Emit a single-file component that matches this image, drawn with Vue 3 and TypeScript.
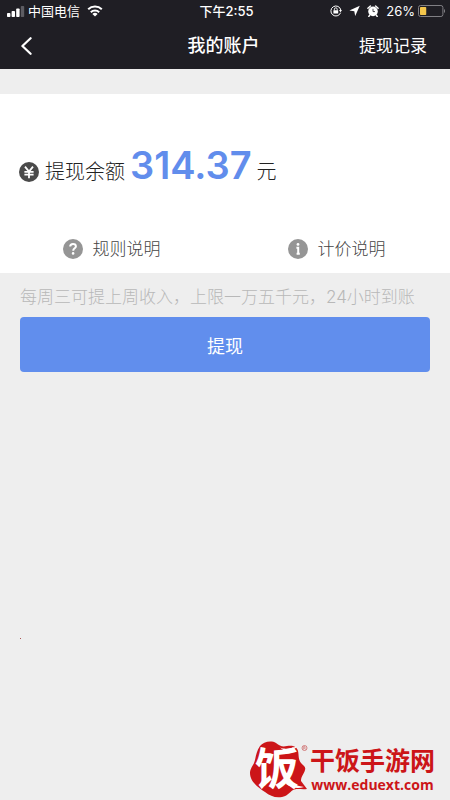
<script setup lang="ts">
import { ref } from 'vue'

const carrier = ref('中国电信')
const time = ref('下午2:55')
const batteryLevel = ref(26)
const balance = ref(314.37)
</script>

<template>
  <div class="page">
    <header class="top">
      <div class="status">
        <div class="status-left">
          <svg class="signal" width="18" height="12" viewBox="0 0 18 12" aria-hidden="true">
            <g fill="#fff">
              <rect x="0" y="8" width="3.4" height="4" rx="0.8" />
              <rect x="4.6" y="6" width="3.4" height="6" rx="0.8" />
              <rect x="9.2" y="3.5" width="3.4" height="8.5" rx="0.8" />
            </g>
            <rect x="13.8" y="1" width="3.4" height="11" rx="0.8" fill="#5d5c62" />
          </svg>
          <span>{{ carrier }}</span>
          <svg class="wifi" width="16" height="12" viewBox="0 0 16 12" aria-hidden="true">
            <g fill="none" stroke="#fff" stroke-width="2">
              <path d="M1.2 4.3a9.8 9.8 0 0 1 13.6 0" />
              <path d="M3.8 7.2a6.1 6.1 0 0 1 8.4 0" />
            </g>
            <path d="M8 11.6 5.4 9a3.8 3.8 0 0 1 5.2 0z" fill="#fff" />
          </svg>
        </div>
        <span class="clock">{{ time }}</span>
        <div class="status-right">
          <svg width="12" height="12" viewBox="0 0 12 12" aria-hidden="true">
            <path d="M10.6 7.7A5 5 0 1 1 10.8 5" fill="none" stroke="#fff" stroke-width="1" />
            <path d="M9 5h3l-1.5 2.2z" fill="#fff" />
            <rect x="3.4" y="5.2" width="4.8" height="3.4" rx="0.4" fill="#fff" />
            <path d="M4.4 5.4V4.2a1.4 1.4 0 0 1 2.8 0v1.2" fill="none" stroke="#fff" stroke-width="0.9" />
          </svg>
          <svg width="11" height="12" viewBox="0 0 11 12" aria-hidden="true">
            <path d="M10.8 0.8 6.2 11 5.3 6.3 0.4 5.5z" fill="#fff" />
          </svg>
          <svg width="12" height="12" viewBox="0 0 12 12" aria-hidden="true">
            <circle cx="6" cy="6.4" r="4.8" fill="#fff" />
            <path d="M0.9 3.2 3.4 1M11.1 3.2 8.6 1M2.7 10.2 1.8 11.5M9.3 10.2l0.9 1.3" stroke="#fff" stroke-width="1.4" stroke-linecap="round" />
            <path d="M6 3.8v2.8h2" fill="none" stroke="#1f1e24" stroke-width="0.8" />
          </svg>
          <span class="percent">{{ batteryLevel }}%</span>
          <svg class="battery" width="28" height="12" viewBox="0 0 28 12" aria-hidden="true">
            <rect x="0.5" y="0.5" width="24.4" height="11" rx="2" fill="none" stroke="#807f84" />
            <rect x="2" y="2" :width="batteryLevel * 0.24" height="8" rx="0.8" fill="#f4c64b" />
            <path d="M26 4a2.4 2.4 0 0 1 0 4z" fill="#807f84" />
          </svg>
        </div>
      </div>
      <nav class="nav">
        <button class="back" type="button" aria-label="返回">
          <svg width="12" height="18" viewBox="0 0 12 18" aria-hidden="true">
            <path d="M10.6 1.2 2.4 9l8.2 7.8" fill="none" stroke="#fff" stroke-width="2.2" stroke-linecap="round" stroke-linejoin="round" />
          </svg>
        </button>
        <h1>我的账户</h1>
        <a class="records" href="#records">提现记录</a>
      </nav>
    </header>

    <main>
      <section class="account">
        <p class="balance">
          <svg width="20" height="20" viewBox="0 0 20 20" aria-hidden="true">
            <circle cx="10" cy="10" r="10" fill="#4a4a4a" />
            <path d="m6 4.6 4 5 4-5M10 9.6v6.6M5.4 9.9h9.2M5.4 12.7h9.2" fill="none" stroke="#fff" stroke-width="1.8" />
          </svg>
          <span class="label">提现余额</span>
          <strong>{{ balance }}</strong>
          <span class="unit">元</span>
        </p>
        <div class="links">
          <a href="#rules">
            <svg width="20" height="20" viewBox="0 0 20 20" aria-hidden="true">
              <circle cx="10" cy="10" r="10" fill="#959595" />
              <path d="M7.2 7.6C7.2 5.8 8.4 5 10 5s2.9.9 2.9 2.4c0 1.9-2.7 2-2.7 4.3" fill="none" stroke="#fff" stroke-width="2" />
              <circle cx="10.1" cy="14.4" r="1.3" fill="#fff" />
            </svg>
            <span>规则说明</span>
          </a>
          <a href="#pricing">
            <svg width="20" height="20" viewBox="0 0 20 20" aria-hidden="true">
              <circle cx="10" cy="10" r="10" fill="#959595" />
              <circle cx="10" cy="5.4" r="1.4" fill="#fff" />
              <path d="M8.4 8.8H10.2V15M8.6 14.8h3.2" fill="none" stroke="#fff" stroke-width="2" />
            </svg>
            <span>计价说明</span>
          </a>
        </div>
      </section>

      <section class="withdraw">
        <p class="hint">每周三可提上周收入，上限一万五千元，24小时到账</p>
        <button class="submit" type="button">提现</button>
        <i class="speck"></i>
      </section>
    </main>

    <aside class="brand">
      <svg class="emblem" width="60" height="58" viewBox="0 0 60 58" aria-hidden="true">
        <path d="M11 6C14 2 22 0 27 3c4 3 6 4 11 3 5-1 10 0 11 5 1 4 0 8 3 12 3 3 5 4 4 7-1 4-4 6-4 11l6 8c-5 1-10-1-14 1-4 3-6 6-11 7-7 1-12-1-17-5C10 48 1 42 1 33c0-5 4-8 5-13C7 15 8 10 11 6Z" fill="#cc1518" />
        <text x="6" y="45" class="emblem-text">饭</text>
        <path d="M31 7.5c5 2.5 12 .5 17-1-2 3-7 5-13 4z" fill="#fff" />
        <path d="M38 40c5 4 10 6 17 7-6 2-13 1-18-3z" fill="#fff" />
        <circle cx="55.5" cy="8" r="2.5" fill="none" stroke="#c66" stroke-width="0.8" />
        <path d="M54.7 9.5v-3h1q1 .7 0 1.5h-1m1 0 .8 1.5" fill="none" stroke="#c66" stroke-width="0.6" />
      </svg>
      <div class="brand-text">
        <span class="brand-name">干饭手游网</span>
        <span class="brand-url">www.eduext.com</span>
      </div>
    </aside>
  </div>
</template>

<style>
body {
  background: #eee;
}
</style>

<style scoped>
.page {
  position: relative;
  min-height: 100vh;
  background: #eee;
  color: #222;
  font-family: Inter, "Noto Sans CJK SC", sans-serif;
}

h1,
p {
  margin: 0;
  font-weight: 400;
}

a {
  color: inherit;
  text-decoration: none;
}

button {
  border: 0;
  padding: 0;
  font: inherit;
  cursor: pointer;
}

svg {
  display: block;
  flex: none;
}

.top {
  background: #1f1e24;
  color: #fff;
}

.status,
.nav {
  display: grid;
  grid-template-columns: 1fr auto 1fr;
  align-items: center;
}

.status {
  height: 22px;
  padding: 0 4px 0 7px;
  font-size: 13px;
  line-height: 22px;
}

.status-left,
.status-right {
  display: flex;
  align-items: center;
}

.status-left {
  gap: 3px;
}

.wifi {
  margin-left: 4px;
}

.status-right {
  justify-content: flex-end;
  gap: 7px;
}

.clock {
  font-weight: 500;
}

.percent {
  margin-right: -4px;
}

.nav {
  height: 47px;
  padding: 0 23px 0 20px;
}

.back {
  display: flex;
  justify-self: start;
  background: none;
  color: inherit;
}

h1 {
  font-size: 18px;
  font-weight: 500;
  line-height: 24px;
}

.records {
  justify-self: end;
  font-size: 17px;
  line-height: 24px;
}

.account {
  margin-top: 25px;
  padding: 46px 0 12px;
  background: #fff;
}

.balance {
  display: flex;
  align-items: baseline;
  padding: 0 19px;
  line-height: 50px;
}

.balance svg {
  align-self: center;
  margin-top: 6px;
  margin-right: 6px;
}

.label,
.unit {
  font-size: 20px;
  font-weight: 300;
}

strong {
  margin: 0 5px;
  color: #618dec;
  font-size: 38px;
  font-weight: 600;
}

.links {
  display: grid;
  grid-template-columns: 1fr 1fr;
  margin-top: 40px;
  color: #444;
  font-size: 17px;
  font-weight: 300;
  line-height: 24px;
}

.links a {
  display: flex;
  align-items: center;
  justify-content: center;
  gap: 10px;
  padding-right: 2px;
}

.withdraw {
  padding: 12px 20px 0;
}

.hint {
  color: #b8b8b8;
  font-size: 17px;
  font-weight: 300;
  line-height: 24px;
  white-space: nowrap;
}

.submit {
  display: block;
  width: 100%;
  height: 55px;
  margin-top: 8px;
  border-radius: 4px;
  background: #618eed;
  color: #fff;
  font-size: 18px;
}

.speck {
  display: block;
  width: 1px;
  height: 1px;
  margin-top: 266px;
  background: #a55;
}

.brand {
  position: absolute;
  right: 15px;
  bottom: 2px;
  display: flex;
  align-items: flex-end;
  gap: 1px;
  color: #cc1518;
}

.emblem-text {
  fill: #fff;
  font-size: 44px;
  font-weight: 700;
}

.brand-text {
  display: flex;
  flex-direction: column;
  align-items: center;
  padding-bottom: 4px;
}

.brand-name {
  font-size: 25px;
  font-weight: 700;
  line-height: 30px;
}

.brand-url {
  font-family: "Open Sans", sans-serif;
  font-size: 14px;
  font-weight: 700;
  line-height: 18px;
}
</style>
